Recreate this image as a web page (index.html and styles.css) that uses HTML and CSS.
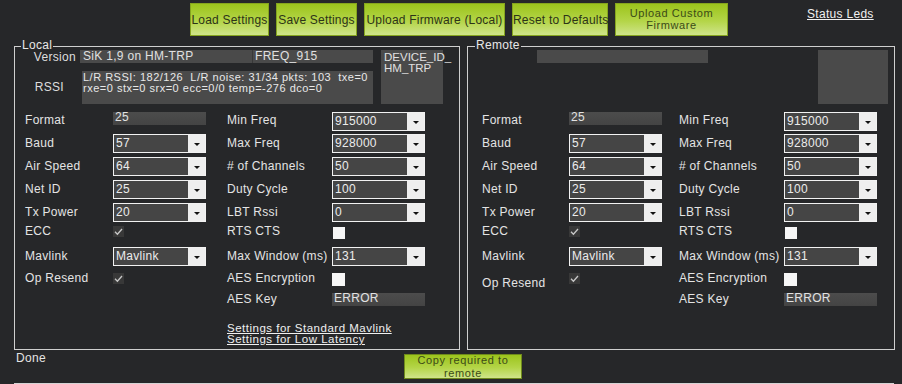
FILE: index.html
```html
<!DOCTYPE html>
<html>
<head>
<meta charset="utf-8">
<title>SiK Radio</title>
<link rel="stylesheet" href="styles.css">
</head>
<body>
<div class="app">
  <div class="toolbar">
    <button class="btn btn-load">Load Settings</button>
    <button class="btn btn-save">Save Settings</button>
    <button class="btn btn-upload">Upload Firmware (Local)</button>
    <button class="btn btn-reset">Reset to Defaults</button>
    <button class="btn btn-two btn-custom"><span class="bline">Upload Custom</span><span class="bline">Firmware</span></button>
    <a class="link status-link">Status Leds</a>
  </div>

  <div class="panels">
    <section class="group group-local">
      <span class="legend">Local</span>
      <div class="header header-local">
        <span class="hlabel">Version</span>
        <div class="verbox"><span class="ver-main">SiK 1,9 on HM-TRP</span><span class="ver-freq">FREQ_915</span></div>
        <div class="devbox"><span class="tline">DEVICE_ID_</span><span class="tline">HM_TRP</span></div>
        <span class="hlabel hlabel-rssi">RSSI</span>
        <div class="rssibox"><span class="tline">L/R RSSI: 182/126&nbsp; L/R noise: 31/34 pkts: 103&nbsp; txe=0</span><span class="tline">rxe=0 stx=0 srx=0 ecc=0/0 temp=-276 dco=0</span></div>
      </div>
      <div class="form form-local">
        <span class="lbl">Format</span><div class="tbox">25</div>
        <span class="lbl lbl-r">Min Freq</span><div class="combo"><span class="combo-val">915000</span><span class="combo-btn"></span></div>

        <span class="lbl">Baud</span><div class="combo"><span class="combo-val">57</span><span class="combo-btn"></span></div>
        <span class="lbl lbl-r">Max Freq</span><div class="combo"><span class="combo-val">928000</span><span class="combo-btn"></span></div>

        <span class="lbl">Air Speed</span><div class="combo"><span class="combo-val">64</span><span class="combo-btn"></span></div>
        <span class="lbl lbl-r"># of Channels</span><div class="combo"><span class="combo-val">50</span><span class="combo-btn"></span></div>

        <span class="lbl">Net ID</span><div class="combo"><span class="combo-val">25</span><span class="combo-btn"></span></div>
        <span class="lbl lbl-r">Duty Cycle</span><div class="combo"><span class="combo-val">100</span><span class="combo-btn"></span></div>

        <span class="lbl">Tx Power</span><div class="combo"><span class="combo-val">20</span><span class="combo-btn"></span></div>
        <span class="lbl lbl-r">LBT Rssi</span><div class="combo"><span class="combo-val">0</span><span class="combo-btn"></span></div>

        <span class="lbl">ECC</span><div class="cell"><span class="chk chk-on"><svg viewBox="0 0 11 11" width="11" height="11"><path d="M2 5.8 L4.4 8.2 L9 3" fill="none" stroke="#c8c8c8" stroke-width="1.3"/></svg></span></div>
        <span class="lbl lbl-r">RTS CTS</span><div class="cell"><span class="chk chk-off"></span></div>

        <span class="lbl">Mavlink</span><div class="combo"><span class="combo-val">Mavlink</span><span class="combo-btn"></span></div>
        <span class="lbl lbl-r">Max Window (ms)</span><div class="combo"><span class="combo-val">131</span><span class="combo-btn"></span></div>

        <span class="lbl">Op Resend</span><div class="cell"><span class="chk chk-on"><svg viewBox="0 0 11 11" width="11" height="11"><path d="M2 5.8 L4.4 8.2 L9 3" fill="none" stroke="#c8c8c8" stroke-width="1.3"/></svg></span></div>
        <span class="lbl lbl-r">AES Encryption</span><div class="cell"><span class="chk chk-off chk-big"></span></div>

        <span class="lbl lbl-key">AES Key</span><div class="tbox tbox-key">ERROR</div>

        <div class="links"><a class="link tline">Settings for Standard Mavlink</a><a class="link tline">Settings for Low Latency</a></div>
      </div>
    </section>

    <section class="group group-remote">
      <span class="legend">Remote</span>
      <div class="header header-remote">
        <div class="verbox verbox-remote"></div>
        <div class="devbox devbox-remote"></div>
      </div>
      <div class="form form-remote">
        <span class="lbl">Format</span><div class="tbox">25</div>
        <span class="lbl lbl-r">Min Freq</span><div class="combo"><span class="combo-val">915000</span><span class="combo-btn"></span></div>

        <span class="lbl">Baud</span><div class="combo"><span class="combo-val">57</span><span class="combo-btn"></span></div>
        <span class="lbl lbl-r">Max Freq</span><div class="combo"><span class="combo-val">928000</span><span class="combo-btn"></span></div>

        <span class="lbl">Air Speed</span><div class="combo"><span class="combo-val">64</span><span class="combo-btn"></span></div>
        <span class="lbl lbl-r"># of Channels</span><div class="combo"><span class="combo-val">50</span><span class="combo-btn"></span></div>

        <span class="lbl">Net ID</span><div class="combo"><span class="combo-val">25</span><span class="combo-btn"></span></div>
        <span class="lbl lbl-r">Duty Cycle</span><div class="combo"><span class="combo-val">100</span><span class="combo-btn"></span></div>

        <span class="lbl">Tx Power</span><div class="combo"><span class="combo-val">20</span><span class="combo-btn"></span></div>
        <span class="lbl lbl-r">LBT Rssi</span><div class="combo"><span class="combo-val">0</span><span class="combo-btn"></span></div>

        <span class="lbl">ECC</span><div class="cell"><span class="chk chk-on"><svg viewBox="0 0 11 11" width="11" height="11"><path d="M2 5.8 L4.4 8.2 L9 3" fill="none" stroke="#c8c8c8" stroke-width="1.3"/></svg></span></div>
        <span class="lbl lbl-r">RTS CTS</span><div class="cell"><span class="chk chk-off"></span></div>

        <span class="lbl">Mavlink</span><div class="combo"><span class="combo-val">Mavlink</span><span class="combo-btn"></span></div>
        <span class="lbl lbl-r">Max Window (ms)</span><div class="combo"><span class="combo-val">131</span><span class="combo-btn"></span></div>

        <span class="lbl lbl-low">Op Resend</span><div class="cell"><span class="chk chk-on"><svg viewBox="0 0 11 11" width="11" height="11"><path d="M2 5.8 L4.4 8.2 L9 3" fill="none" stroke="#c8c8c8" stroke-width="1.3"/></svg></span></div>
        <span class="lbl lbl-r">AES Encryption</span><div class="cell"><span class="chk chk-off chk-big"></span></div>

        <span class="lbl lbl-key">AES Key</span><div class="tbox tbox-key">ERROR</div>
      </div>
    </section>
  </div>

  <div class="footer">
    <span class="done">Done</span>
    <button class="btn btn-two btn-copy"><span class="bline">Copy required to</span><span class="bline">remote</span></button>
  </div>
  <div class="progress"></div>
</div>
</body>
</html>
```

FILE: styles.css
```css
html, body {
  margin: 0;
  padding: 0;
  background: #262729;
  overflow: hidden;
}
body {
  font-family: "Liberation Sans", Arial, sans-serif;
  font-size: 12px;
  letter-spacing: 0.3px;
  color: #e2e2e2;
  width: 902px;
  height: 384px;
}
.app {
  display: flex;
  flex-direction: column;
}

/* toolbar */
.toolbar {
  display: flex;
  align-items: flex-start;
  gap: 7px;
  padding: 3px 0 0 190px;
  height: 33px;
}
.btn {
  box-sizing: border-box;
  height: 33px;
  padding: 0;
  margin: 0;
  border: 1px solid #86a51f;
  background: linear-gradient(#9cc41c, #b4d548 55%, #cfe48a);
  color: #2c3318;
  font-family: "Liberation Sans", Arial, sans-serif;
  font-size: 12px;
  letter-spacing: 0.2px;
  line-height: 12px;
  white-space: nowrap;
  text-align: center;
}
.btn-two {
  display: flex;
  flex-direction: column;
  align-items: center;
  justify-content: center;
}
.bline {
  display: block;
  height: 12.5px;
  line-height: 12.5px;
  font-size: 11px;
  letter-spacing: 0.6px;
}
.btn-load { width: 79px; }
.btn-save { width: 81px; }
.btn-upload { width: 141px; }
.btn-reset { width: 96px; }
.btn-custom { width: 113px; color: #3b4a17; padding-bottom: 1px; }
.link {
  color: #f0f0f0;
  text-decoration: underline;
  white-space: nowrap;
  line-height: 11px;
}
.status-link {
  margin: 6px 0 0 72px;
}

/* single text line in a tight stack */
.tline {
  display: block;
  height: 11px;
  line-height: 11px;
  font-size: 11px;
  white-space: nowrap;
}

/* panels */
.panels {
  display: flex;
  gap: 7px;
  margin: 10px 0 0 14px;
}
.group {
  position: relative;
  box-sizing: border-box;
  height: 304px;
  border: 1px solid #cfcfcf;
}
.group-local { width: 446px; }
.group-remote { width: 428px; }
.legend {
  position: absolute;
  top: -8px;
  left: 6px;
  padding: 0 1px;
  line-height: 12px;
  background: #262729;
  color: #e8e8e8;
}
.group-remote .legend { left: 7px; }

/* header boxes */
.header {
  display: grid;
  padding-top: 3px;
  grid-template-rows: 13px 33px;
  row-gap: 8px;
  height: 54px;
}
.header-local {
  grid-template-columns: 65px 293px 70px;
  column-gap: 0;
}
.header-local .devbox { margin-left: 8px; }
.hlabel {
  text-align: right;
  padding-right: 4px;
  line-height: 15px;
  color: #dedede;
}
.hlabel-rssi {
  line-height: 33px;
  padding-right: 16px;
}
.verbox {
  display: flex;
  gap: 1px;
  background: #383838;
}
.ver-main, .ver-freq {
  background: #4a4a4a;
  line-height: 12px;
  padding-left: 3px;
  color: #e0e0e0;
}
.ver-main { width: 169px; }
.ver-freq { flex: 1; padding-left: 2px; }
.devbox {
  grid-row: 1 / 3;
  grid-column: 3;
  background: #4a4a4a;
  padding: 2px 0 0 3px;
  color: #e0e0e0;
}
.devbox .tline {
  font-size: 11.5px;
  letter-spacing: 0;
}
.rssibox {
  margin-left: 2px;
  background: #4a4a4a;
  padding: 1px 0 0 1px;
  color: #e8e8e8;
}
.rssibox .tline { letter-spacing: 0.5px; }
.header-remote {
  grid-template-columns: 69px 171px 1fr 70px;
  padding-right: 6px;
}
.verbox-remote {
  grid-column: 2;
  grid-row: 1;
  background: #4a4a4a;
}
.devbox-remote {
  grid-column: 4;
  grid-row: 1 / 3;
  margin-left: 0;
}

/* forms */
.form {
  display: grid;
  margin-top: 7px;
  grid-template-rows: 23px 23px 23px 23px 19px 25px 22px 21px 19px auto;
  grid-auto-flow: row;
}
.form-local {
  padding-left: 10px;
  grid-template-columns: 88px 93px 126px 93px;
}
.form-remote {
  padding-left: 14px;
  grid-template-columns: 87px 93px 122px 93px;
}
.form-local .lbl-r { padding-left: 21px; }
.form-remote .lbl-r { padding-left: 17px; }
.lbl {
  height: 19px;
  line-height: 19px;
  white-space: nowrap;
  color: #e4e4e4;
}
.lbl-low { line-height: 29px; }
.lbl-key {
  grid-column: 3;
  grid-row: 9;
}
.form-local .lbl-key { padding-left: 21px; }
.form-remote .lbl-key { padding-left: 17px; }
.tbox-key {
  grid-column: 4;
  grid-row: 9;
  margin-top: 3px !important;
}
.tbox {
  box-sizing: border-box;
  height: 13px;
  margin-top: 1px;
  background: linear-gradient(#4c4c4c, #444444);
  line-height: 11px;
  padding-left: 2px;
  color: #e2e2e2;
  font-size: 12px;
}
.combo {
  box-sizing: border-box;
  display: flex;
  height: 19px;
  border: 1px solid #f2f2f2;
  background: #454545;
}
.form .combo:nth-child(4) { margin-top: 1px; }
.combo-val {
  flex: 1;
  line-height: 16px;
  padding-left: 2px;
  color: #ececec;
}
.combo-btn {
  width: 17px;
  background: #eeeeee;
  display: flex;
  align-items: center;
  justify-content: center;
}
.combo-btn::after {
  content: "";
  width: 0;
  height: 0;
  border-left: 3px solid transparent;
  border-right: 3px solid transparent;
  border-top: 3px solid #111;
  margin-top: 1px;
}
.cell {
  height: 19px;
  display: flex;
  align-items: center;
}
.chk {
  box-sizing: border-box;
  display: inline-flex;
  width: 11px;
  height: 11px;
}
.chk-on {
  background: #383838;
}
.chk-off {
  background: #f6f6f6;
  width: 12px;
  height: 12px;
  margin-left: 1px;
  margin-top: 2px;
}
.chk-big {
  width: 13px;
  height: 13px;
  margin-left: 0;
  margin-top: 1px;
}
.links {
  grid-column: 3 / 5;
  grid-row: 10;
  display: flex;
  flex-direction: column;
  padding-left: 21px;
  margin-top: 14px;
}
.links .tline {
  font-size: 11.5px;
  letter-spacing: 0.5px;
}

/* footer */
.footer {
  display: flex;
  align-items: flex-start;
  margin-top: 4px;
}
.done {
  width: 388px;
  padding-left: 16px;
  margin-top: -2px;
  line-height: 12px;
  color: #e4e4e4;
}
.btn-copy {
  width: 118px;
  height: 25px;
  color: #3b4a17;
  border-color: #6f8a1c;
}
.progress {
  margin: 4px 8px 0 14px;
  height: 10px;
  background: #d4d4d4;
}
```
